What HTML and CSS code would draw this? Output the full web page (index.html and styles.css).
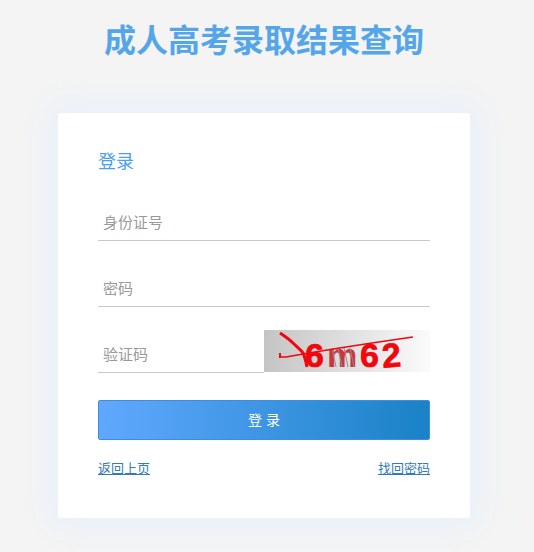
FILE: index.html
```html
<!DOCTYPE html>
<html lang="zh-CN">
<head>
    <meta charset="UTF-8">
    <title>成人高考录取结果查询</title>
    <link rel="stylesheet" href="styles.css">
</head>
<body>
    <div class="page">
        <h1 class="title">成人高考录取结果查询</h1>
        <div class="card">
            <div class="card-title">登录</div>
            <div class="field"><input class="input" type="text" placeholder="身份证号"></div>
            <div class="field"><input class="input" type="password" placeholder="密码"></div>
            <div class="field code-field">
                <input class="input" type="text" placeholder="验证码">
                <svg class="captcha" viewBox="0 0 166 42" width="166" height="42">
                    <defs>
                        <linearGradient id="captcha-bg">
                            <stop offset="0" stop-color="#c4c4c4"/>
                            <stop offset="1" stop-color="#fbfbfb"/>
                        </linearGradient>
                    </defs>
                    <rect width="166" height="42" fill="url(#captcha-bg)"/>
                    <text class="captcha-text" x="41" y="37">6</text>
                    <text class="captcha-text captcha-m" x="63" y="37">m</text>
                    <text class="captcha-text" x="96" y="37">6</text>
                    <text class="captcha-text" x="118" y="37" transform="rotate(-4 128 26)">2</text>
                    <path d="M68 18 L72 37 M74 18 L78 37 M80 18 L84 37 M86 18 L90 37" stroke="#8d8d8d" stroke-width="1"/>
                    <path d="M16 3 C22 7 26 10 29 13 C34 18 37 20 39 23 C41 27 42 32 43 37" fill="none" stroke="#f0060c" stroke-width="3"/>
                    <path d="M16 27 L22 27 C50 22 100 14 149 7" fill="none" stroke="#f0060c" stroke-width="1.3"/>
                    <path d="M16 23 L16 28" stroke="#f0060c" stroke-width="2"/>
                </svg>
            </div>
            <button class="btn" type="button">登 录</button>
            <div class="links">
                <a href="#">返回上页</a>
                <a href="#">找回密码</a>
            </div>
        </div>
    </div>
</body>
</html>
```

FILE: styles.css
```css
html, body {
    height: 100%;
}

body {
    margin: 0;
    background: #f4f4f4;
    font-family: "Liberation Sans", "Noto Sans CJK SC", sans-serif;
    overflow: hidden;
}

.page {
    width: 412px;
    min-height: 552px;
    margin-left: 58px;
}

.title {
    margin: 0;
    padding-top: 21px;
    height: 113px;
    box-sizing: border-box;
    font-size: 32px;
    line-height: 40px;
    font-weight: bold;
    text-align: center;
    color: #55a6e8;
}

.card {
    height: 405px;
    box-sizing: border-box;
    padding: 37px 40px 0;
    background: #fff;
    border-radius: 2px;
    box-shadow: 0 0 30px 10px rgba(224, 238, 255, 0.55);
}

.card-title {
    font-size: 18px;
    line-height: 24px;
    color: #4a9ff0;
    margin-bottom: 19px;
}

.field {
    display: flex;
    align-items: flex-end;
    height: 48px;
    margin-bottom: 18px;
}

.input {
    display: block;
    width: 100%;
    height: 36px;
    box-sizing: border-box;
    padding: 0 5px;
    border: 0;
    border-bottom: 1px solid #c8c8c8;
    outline: none;
    background: transparent;
    font-family: inherit;
    font-size: 15px;
}

.input::placeholder {
    color: #999;
}

.code-field {
    height: 43px;
    margin-top: 23px;
    margin-bottom: 27px;
}

.code-field .input {
    width: 166px;
    flex: none;
}

.captcha {
    display: block;
    flex: none;
    margin-bottom: 1px;
    overflow: visible;
}

.captcha-text {
    font-family: "Liberation Sans", sans-serif;
    font-size: 34px;
    font-weight: bold;
    fill: #f0060c;
    stroke: #f0060c;
    stroke-width: 0.7px;
}

.captcha-m {
    fill: #d0343a;
    stroke: none;
}

.btn {
    display: block;
    width: 100%;
    height: 40px;
    padding: 0 0 2px;
    border: 1px solid #3d8fdc;
    border-radius: 2px;
    background: linear-gradient(90deg, #60a8ff, #1a82c6);
    color: #fff;
    font-family: inherit;
    font-size: 14px;
}

.links {
    display: flex;
    justify-content: space-between;
    margin-top: 20px;
    font-size: 13px;
    line-height: 18px;
}

.links a {
    color: #337ab7;
}
```
